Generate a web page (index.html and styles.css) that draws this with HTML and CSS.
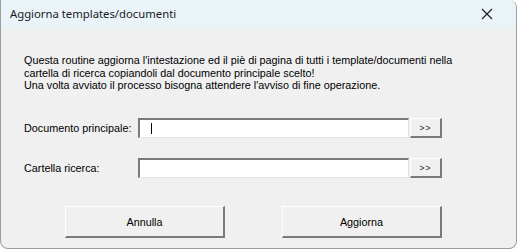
FILE: index.html
```html
<!DOCTYPE html>
<html lang="it">
<head>
<meta charset="utf-8">
<title>Aggiorna templates/documenti</title>
<link rel="stylesheet" href="styles.css">
</head>
<body>
<div class="window">
  <div class="titlebar">
    <span class="title">Aggiorna templates/documenti</span>
    <span class="close" aria-label="Chiudi">
      <svg width="12" height="12" viewBox="0 0 12 12"><path d="M1 1 L11 11 M11 1 L1 11" stroke="#1a1a1a" stroke-width="1.1" fill="none"/></svg>
    </span>
  </div>
  <div class="content">
    <p class="intro">Questa routine aggiorna l'intestazione ed il piè di pagina di tutti i template/documenti nella<br>cartella di ricerca copiandoli dal documento principale scelto!<br>Una volta avviato il processo bisogna attendere l'avviso di fine operazione.</p>
    <div class="field first">
      <span class="label">Documento principale:</span>
      <div class="input"><span class="caret"></span></div>
      <button class="browse">&gt;&gt;</button>
    </div>
    <div class="field second">
      <span class="label">Cartella ricerca:</span>
      <div class="input"></div>
      <button class="browse">&gt;&gt;</button>
    </div>
    <div class="actions">
      <button class="btn">Annulla</button>
      <button class="btn">Aggiorna</button>
    </div>
  </div>
</div>
</body>
</html>
```
FILE: styles.css
```css
html, body {
  margin: 0;
  padding: 0;
  background: #ffffff;
}
body {
  width: 517px;
  height: 249px;
  overflow: hidden;
}
.window {
  box-sizing: border-box;
  width: 517px;
  height: 249px;
  border: 1px solid #9c9c9c;
  border-top: none;
  border-radius: 0 8px 8px 8px;
  background: #f0f0f0;
  overflow: hidden;
  display: flex;
  flex-direction: column;
}
.titlebar {
  height: 29px;
  flex: none;
  background: #eaf4f8;
  display: flex;
  align-items: center;
  justify-content: space-between;
  padding: 0 23px 0 9px;
}
.title {
  font-family: "Noto Sans", sans-serif;
  font-size: 11.3px;
  color: #1a1a1a;
  position: relative;
  top: -1px;
}
.close {
  display: flex;
  width: 12px;
  height: 12px;
  position: relative;
  top: -1px;
}
.content {
  flex: 1;
  display: flex;
  flex-direction: column;
  padding: 25px 0 0 23px;
  font-family: "Liberation Sans", Arial, sans-serif;
  font-size: 10.8px;
  color: #000;
}
.intro {
  margin: 0;
  line-height: 12.5px;
  height: 39px;
}
.field {
  display: grid;
  grid-template-columns: 113px 271px 32px;
  column-gap: 1px;
  align-items: center;
  height: 20px;
}
.field.first { margin-top: 25px; }
.field.second { margin-top: 20px; }
.label {
  white-space: nowrap;
}
.input {
  box-sizing: border-box;
  height: 20px;
  background: #fff;
  border-top: 2px solid #7a7a7a;
  border-left: 2px solid #7a7a7a;
  border-right: 1px solid #e3e3e3;
  border-bottom: 1px solid #e3e3e3;
  display: flex;
  align-items: center;
  padding-left: 11px;
}
.caret {
  width: 1px;
  height: 11px;
  background: #000;
}
.browse, .btn {
  box-sizing: border-box;
  background: #f0f0f0;
  border-top: 1px solid #ffffff;
  border-left: 1px solid #ffffff;
  border-right: 2px solid #7a7a7a;
  border-bottom: 2px solid #7a7a7a;
  font-family: "Liberation Sans", Arial, sans-serif;
  color: #000;
  padding: 0;
  margin: 0;
}
.browse {
  height: 20px;
  width: 32px;
  font-size: 8.5px;
  letter-spacing: 1px;
  color: #222;
}
.actions {
  display: flex;
  margin-top: 28px;
  padding-left: 41px;
  gap: 57px;
}
.btn {
  height: 32px;
  width: 160px;
  font-size: 10.8px;
}
```
